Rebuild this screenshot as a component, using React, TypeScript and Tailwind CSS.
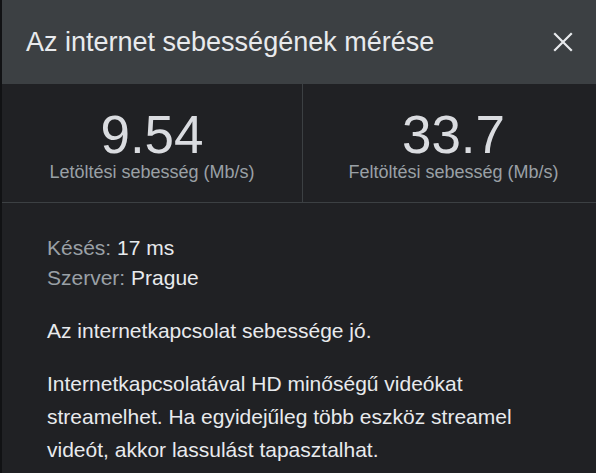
import React from 'react';

const STATS = [
    { value: '9.54', label: 'Letöltési sebesség (Mb/s)' },
    { value: '33.7', label: 'Feltöltési sebesség (Mb/s)' },
];

function CloseIcon() {
    return (
        <svg width="20" height="20" viewBox="0 0 20 20" fill="none" stroke="#e8eaed" strokeWidth="2.2" strokeLinecap="square">
            <path d="M2 2 L18 18 M18 2 L2 18" />
        </svg>
    );
}

export default function App() {
    return (
        <div className="flex h-[473px] w-[596px] overflow-hidden bg-[#111214] font-['Liberation_Sans',Arial,sans-serif]">
            <div className="w-[2px] shrink-0" />
            <div className="flex w-[602px] shrink-0 flex-col bg-[#202124]">
                {/* header */}
                <div className="flex h-[84px] shrink-0 items-center justify-between bg-[#3c4043] pl-[24px] pr-[31px]">
                    <h1 className="text-[27px] leading-none text-[#e8eaed]">Az internet sebességének mérése</h1>
                    <button type="button" className="text-[#e8eaed]">
                        <CloseIcon />
                    </button>
                </div>

                {/* stats */}
                <div className="grid h-[119px] shrink-0 grid-cols-2 border-b border-[#3c4043]">
                    {STATS.map((s, i) => (
                        <div
                            key={s.label}
                            className={`flex flex-col items-center pt-[24px] ${i === 0 ? 'border-r border-[#3c4043]' : ''}`}
                        >
                            <div className="text-[53px] leading-[54px] text-[#dadce0]">{s.value}</div>
                            <div className="text-[18px] leading-[20px] text-[#9aa0a6]">{s.label}</div>
                        </div>
                    ))}
                </div>

                {/* details */}
                <div className="px-[45px] pt-[30px] text-[21px] text-[#e8eaed]">
                    <div className="leading-[30px]">
                        <div>
                            <span className="text-[#9aa0a6]">Késés: </span>17 ms
                        </div>
                        <div>
                            <span className="text-[#9aa0a6]">Szerver: </span>Prague
                        </div>
                    </div>
                    <p className="mt-[21px] leading-[33px]">Az internetkapcsolat sebessége jó.</p>
                    <p className="mt-[20px] w-[510px] leading-[33px]">
                        Internetkapcsolatával HD minőségű videókat streamelhet. Ha egyidejűleg több eszköz streamel
                        videót, akkor lassulást tapasztalhat.
                    </p>
                </div>
            </div>
        </div>
    );
}
